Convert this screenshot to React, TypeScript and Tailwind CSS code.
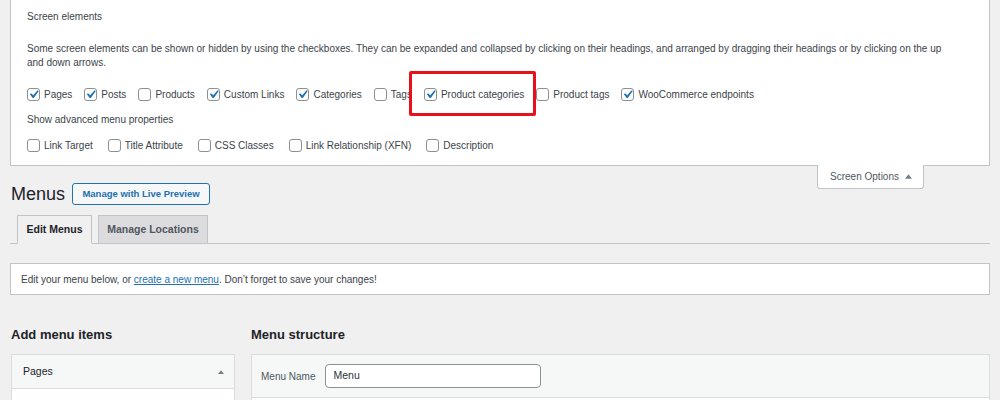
import { ReactNode } from "react";

type CheckProps = {
  label: string;
  checked?: boolean;
};

function Check({ label, checked }: CheckProps) {
  return (
    <label className="flex items-center gap-[4px] whitespace-nowrap">
      <span className="flex h-[13px] w-[13px] shrink-0 items-center justify-center overflow-visible rounded-[3px] border border-[#8c8f94] bg-white">
        {checked && (
          <svg viewBox="0 0 20 20" className="h-[17px] w-[17px] shrink-0">
            <path d="M14.83 4.89l1.34.94-5.81 8.38H9.02L5.78 9.67l1.34-1.25 2.57 2.4z" fill="#2271b1" />
          </svg>
        )}
      </span>
      <span>{label}</span>
    </label>
  );
}

function UpArrow({ className }: { className?: string }) {
  return (
    <svg viewBox="0 0 8 5" className={className}>
      <path d="M0 5 L4 0 L8 5 Z" fill="#787c82" />
    </svg>
  );
}

function Tab({ children, active, width }: { children: ReactNode; active?: boolean; width: string }) {
  return (
    <div
      className={`-mb-px flex h-[29px] items-center justify-center border text-[10.5px] font-bold ${width} ${
        active
          ? "border-[#c3c4c7] border-b-[#f0f0f1] bg-[#f0f0f1] text-[#1d2327]"
          : "border-[#c3c4c7] bg-[#dcdcde] text-[#50575e]"
      }`}
    >
      {children}
    </div>
  );
}

export default function App() {
  return (
    <main className="h-[400px] w-[1000px] overflow-hidden bg-[#f0f0f1] px-[10px] font-['Liberation_Sans',Arial,sans-serif] text-[10px] text-[#3c434a]">
      {/* screen options panel */}
      <section className="relative border-x border-b border-[#c3c4c7] bg-white px-[16px] pb-[13px] pt-[10px]">
        <h5 className="leading-[14px]">Screen elements</h5>
        <p className="mt-[18px] leading-[14px]">
          Some screen elements can be shown or hidden by using the checkboxes. They can be expanded and collapsed by clicking on
          their headings, and arranged by dragging their headings or by clicking on the up
          <br />
          and down arrows.
        </p>
        <div className="mt-[18px] flex items-center gap-[12px] leading-[13px]">
          <Check label="Pages" checked />
          <Check label="Posts" checked />
          <Check label="Products" />
          <Check label="Custom Links" checked />
          <Check label="Categories" checked />
          <Check label="Tags" />
          <Check label="Product categories" checked />
          <Check label="Product tags" />
          <Check label="WooCommerce endpoints" checked />
        </div>
        <h5 className="mt-[12px] leading-[14px]">Show advanced menu properties</h5>
        <div className="mt-[12px] flex items-center gap-[15px] leading-[13px]">
          <Check label="Link Target" />
          <Check label="Title Attribute" />
          <Check label="CSS Classes" />
          <Check label="Link Relationship (XFN)" />
          <Check label="Description" />
        </div>

        {/* annotation */}
        <div className="absolute left-[398px] top-[71px] h-[45px] w-[127px] rounded-[2px] border-[3px] border-[#e8101a]" />

        <button className="absolute right-[65px] top-full z-10 flex h-[24px] items-center gap-[6px] rounded-b-[3px] border-x border-b border-[#c3c4c7] bg-white pl-[12px] pr-[11px] text-[10px] text-[#50575e]">
          Screen Options
          <UpArrow className="h-[5px] w-[7px]" />
        </button>
      </section>

      {/* heading */}
      <div className="mt-[17px] flex items-center gap-[7px] pl-[1px]">
        <h1 className="text-[18px] leading-[22px] text-[#1d2327]">Menus</h1>
        <a className="flex h-[22px] w-[138px] items-center justify-center rounded-[3px] border border-[#2271b1] bg-[#f6f7f7] text-[9.5px] font-bold text-[#2271b1]">
          Manage with Live Preview
        </a>
      </div>

      <nav className="mt-[10px] flex gap-[6px] border-b border-[#c3c4c7] pl-[7px]">
        <Tab active width="w-[75px]">
          Edit Menus
        </Tab>
        <Tab width="w-[110px]">Manage Locations</Tab>
      </nav>

      <div className="mt-[19px] flex h-[32px] items-center border border-[#c3c4c7] bg-white px-[10px]">
        <p>
          Edit your menu below, or{" "}
          <a className="text-[#2271b1] underline">create a new menu</a>. Don’t forget to save your changes!
        </p>
      </div>

      <div className="mt-[31px] flex gap-[16px] pl-[1px]">
        <div className="w-[224px] shrink-0">
          <h2 className="text-[13px] font-bold leading-[18px] text-[#1d2327]">Add menu items</h2>
          <div className="mt-[10px] h-[60px] border border-[#dcdcde] bg-white">
            <div className="flex h-[34px] items-center justify-between border-b border-[#dcdcde] bg-[#f6f7f7] pl-[11px] pr-[10px] text-[10.5px] text-[#1d2327]">
              <span>Pages</span>
              <UpArrow className="h-[4px] w-[6px]" />
            </div>
          </div>
        </div>

        <div className="flex-1">
          <h2 className="text-[13px] font-bold leading-[18px] text-[#1d2327]">Menu structure</h2>
          <div className="mt-[10px] h-[60px] border border-[#dcdcde] bg-white">
            <div className="flex h-[43px] items-center gap-[10px] border-b border-[#dcdcde] bg-[#f6f7f7] pl-[9px]">
              <span className="text-[10px] text-[#50575e]">Menu Name</span>
              <div className="flex h-[24px] w-[216px] items-center rounded-[4px] border border-[#8c8f94] bg-white pl-[7px] text-[10.5px] text-[#2c3338]">
                Menu
              </div>
            </div>
          </div>
        </div>
      </div>
    </main>
  );
}
